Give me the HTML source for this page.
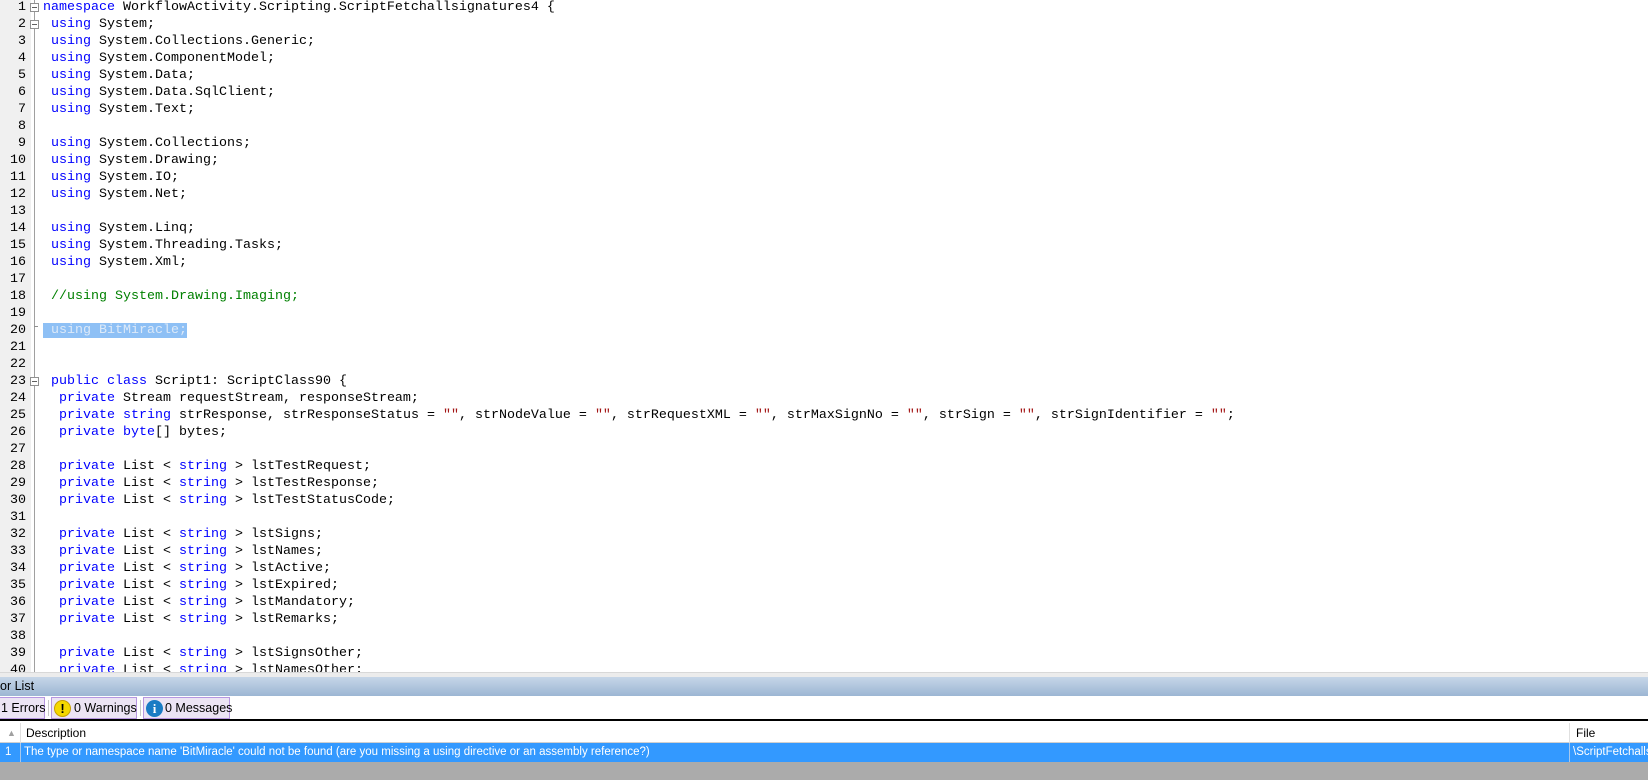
<!DOCTYPE html>
<html><head><meta charset="utf-8"><style>
*{margin:0;padding:0;box-sizing:border-box}
body{width:1648px;height:780px;overflow:hidden;background:#fff;position:relative;font-family:"Liberation Sans",sans-serif}
#ed{position:absolute;left:0;top:0;width:1648px;height:672px;overflow:hidden;background:#fff}
#gut{position:absolute;left:0;top:0;width:31px;height:672px;background:#f0f0f0}
#fl{position:absolute;left:34px;top:0;width:1px;height:672px;background:#a0a0a0}
.ln{position:absolute;left:0;width:26px;text-align:right;font:13.33px/17px "Liberation Mono",monospace;color:#000}
.cl{position:absolute;left:43px;white-space:pre;font:13.33px/17px "Liberation Mono",monospace;color:#000}
.k{color:#0000ff}.s{color:#a31515}.c{color:#008000}
.box{position:absolute;left:30px;width:9px;height:9px;border:1px solid #909090;background:#fff}
.box:after{content:"";position:absolute;left:1px;top:3px;width:5px;height:1px;background:#606060}
.hl{background:#8ec0f5;color:#dce9f8}
#sep{position:absolute;left:0;top:672px;width:1648px;height:5px;background:#ececec;border-top:1px solid #d8d8d8}
#title{position:absolute;left:0;top:677px;width:1648px;height:19px;background:linear-gradient(#c6d6e8,#9cb6d3);font-size:12.5px;line-height:19px;color:#000}
#tb{position:absolute;left:0;top:696px;width:1648px;height:25px;background:#fff;border-bottom:2px solid #000}
.btn{position:absolute;top:1px;height:22px;border:1px solid #b696e0;background:#ece4f4;font-size:12.5px;line-height:20px;color:#000;white-space:nowrap}
.btn span{white-space:nowrap}
.vs{position:absolute;top:4px;width:1px;height:16px;background:#c8c8c8}
.ico{position:absolute;top:2px;width:17px;height:17px;border-radius:50%;text-align:center;font-weight:bold;font-size:13px;line-height:17px}
#hdr{position:absolute;left:0;top:723px;width:1648px;height:20px;background:#fff;font-size:12px;line-height:20px;border-bottom:1px solid #d0d0d0}
#row{position:absolute;left:0;top:743px;width:1648px;height:19px;background:#3399ff;color:#fff;font-size:11.5px;line-height:19px}
#bot{position:absolute;left:0;top:762px;width:1648px;height:18px;background:#ababab}
</style></head><body>
<div id="ed">
<div id="gut"></div><div id="fl"></div>
<div class="box" style="top:3px"></div>
<div class="box" style="top:20px"></div>
<div class="box" style="top:377px"></div>
<div style="position:absolute;left:34px;top:326px;width:4px;height:1px;background:#909090"></div>
<div id="lines"></div>
</div>
<div id="sep"></div>
<div id="title">or List</div>
<div id="tb">
<div class="btn" style="left:-1px;width:46px;padding-left:1px">1 Errors</div>
<div class="vs" style="left:48px"></div>
<div class="btn" style="left:51px;width:86px"><div class="ico" style="left:2px;background:#f5d800;border:1px solid #c8a000;color:#000;line-height:15px">!</div><span style="position:absolute;left:22px">0 Warnings</span></div>
<div class="vs" style="left:140px"></div>
<div class="btn" style="left:143px;width:87px"><div class="ico" style="left:2px;background:#1a7cc4;color:#fff;font-family:'Liberation Serif',serif">i</div><span style="position:absolute;left:21px">0 Messages</span></div>
</div>
<div id="hdr">
<span style="position:absolute;left:7px;top:0;color:#a0a0a0;font-size:9px">▲</span>
<div style="position:absolute;left:20px;top:0;width:1px;height:20px;background:#e0e0e0"></div>
<span style="position:absolute;left:26px">Description</span>
<div style="position:absolute;left:1569px;top:0;width:1px;height:20px;background:#e0e0e0"></div>
<span style="position:absolute;left:1576px">File</span>
</div>
<div id="row">
<span style="position:absolute;left:5px">1</span>
<div style="position:absolute;left:20px;top:0;width:1px;height:19px;background:#a8c8ec"></div>
<span style="position:absolute;left:24px;white-space:nowrap">The type or namespace name 'BitMiracle' could not be found (are you missing a using directive or an assembly reference?)</span>
<div style="position:absolute;left:1569px;top:0;width:1px;height:19px;background:#a8c8ec"></div>
<span style="position:absolute;left:1573px;white-space:nowrap">\ScriptFetchallsignatures4.cs</span>
</div>
<div id="bot"></div>
<script>
const K=s=>'<span class="k">'+s+'</span>',S='<span class="s">""</span>',C=s=>'<span class="c">'+s+'</span>';
const u=t=>' '+K('using')+' '+t+';';
const L=[
K('namespace')+' WorkflowActivity.Scripting.ScriptFetchallsignatures4 {',
u('System'),u('System.Collections.Generic'),u('System.ComponentModel'),u('System.Data'),u('System.Data.SqlClient'),u('System.Text'),'',
u('System.Collections'),u('System.Drawing'),u('System.IO'),u('System.Net'),'',
u('System.Linq'),u('System.Threading.Tasks'),u('System.Xml'),'',
' '+C('//using System.Drawing.Imaging;'),'',
'<span class="hl"> using BitMiracle;</span>','','',
' '+K('public')+' '+K('class')+' Script1: ScriptClass90 {',
'  '+K('private')+' Stream requestStream, responseStream;',
'  '+K('private')+' '+K('string')+' strResponse, strResponseStatus = '+S+', strNodeValue = '+S+', strRequestXML = '+S+', strMaxSignNo = '+S+', strSign = '+S+', strSignIdentifier = '+S+';',
'  '+K('private')+' '+K('byte')+'[] bytes;','',
];
const lst=n=>'  '+K('private')+' List &lt; '+K('string')+' &gt; '+n+';';
['lstTestRequest','lstTestResponse','lstTestStatusCode'].forEach(n=>L.push(lst(n)));L.push('');
['lstSigns','lstNames','lstActive','lstExpired','lstMandatory','lstRemarks'].forEach(n=>L.push(lst(n)));L.push('');
['lstSignsOther','lstNamesOther'].forEach(n=>L.push(lst(n)));
let h='';
L.forEach((t,i)=>{const y=i*17-1.5;h+='<div class="ln" style="top:'+y+'px">'+(i+1)+'</div><div class="cl" style="top:'+y+'px">'+t+'</div>';});
document.getElementById('lines').innerHTML=h;
</script>
</body></html>
